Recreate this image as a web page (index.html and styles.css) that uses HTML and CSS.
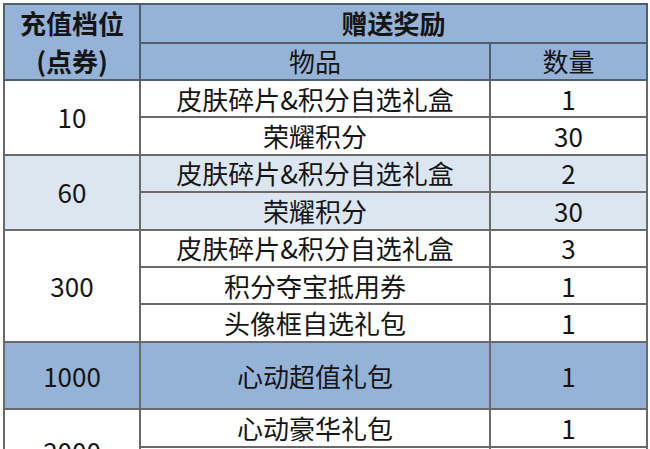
FILE: index.html
```html
<!DOCTYPE html>
<html lang="zh-CN">
<head>
<meta charset="utf-8">
<link rel="stylesheet" href="styles.css">
</head>
<body>
<table class="rewards">
  <colgroup>
    <col class="c-tier">
    <col class="c-item">
    <col class="c-qty">
  </colgroup>
  <thead>
    <tr class="h1">
      <th rowspan="2" class="tier-head"><span class="ln">充值档位</span><span class="ln">(点券)</span></th>
      <th colspan="2">赠送奖励</th>
    </tr>
    <tr class="h2">
      <th class="sub">物品</th>
      <th class="sub">数量</th>
    </tr>
  </thead>
  <tbody>
    <tr class="r"><td rowspan="2">10</td><td>皮肤碎片&amp;积分自选礼盒</td><td>1</td></tr>
    <tr class="r"><td>荣耀积分</td><td>30</td></tr>
    <tr class="r band"><td rowspan="2">60</td><td>皮肤碎片&amp;积分自选礼盒</td><td>2</td></tr>
    <tr class="r band"><td>荣耀积分</td><td>30</td></tr>
    <tr class="r"><td rowspan="3">300</td><td>皮肤碎片&amp;积分自选礼盒</td><td>3</td></tr>
    <tr class="r"><td>积分夺宝抵用券</td><td>1</td></tr>
    <tr class="r"><td>头像框自选礼包</td><td>1</td></tr>
    <tr class="r tall hl"><td>1000</td><td>心动超值礼包</td><td>1</td></tr>
    <tr class="r"><td rowspan="2">2000</td><td>心动豪华礼包</td><td>1</td></tr>
    <tr class="r last"><td>心动豪华礼包</td><td>1</td></tr>
  </tbody>
</table>
</body>
</html>
```

FILE: styles.css
```css
html, body {
  margin: 0;
  padding: 0;
  background: #ffffff;
  overflow: hidden;
}
body {
  padding: 3px 0 0 3px;
  font-family: "Noto Sans CJK SC", "Noto Sans", sans-serif;
  color: #151515;
}
.rewards {
  border-collapse: collapse;
  table-layout: fixed;
  width: 643px;
  font-size: 26px;
  border: 2px solid #3a3a3a;
}
.c-tier { width: 136px; }
.c-item { width: 350px; }
.c-qty { width: 157px; }
.rewards th,
.rewards td {
  border: 2px solid #6a6a6a;
  padding: 0;
  text-align: center;
  vertical-align: middle;
  line-height: 30px;
  white-space: nowrap;
}
.rewards thead th {
  background: #95b3d7;
  border-color: #4f5e70;
  font-weight: 700;
}
.rewards thead th.sub {
  font-weight: 400;
}
.tier-head .ln {
  display: block;
  line-height: 30px;
}
.tier-head .ln + .ln {
  margin-top: 8px;
}
.h1 { height: 38.7px; }
.h2 { height: 37.3px; }
.r { height: 37.4px; }
.band td { background: #dce6f1; }
.hl td { background: #95b3d7; }
.tall { height: 67.6px; }
.last { height: 45px; }
```
